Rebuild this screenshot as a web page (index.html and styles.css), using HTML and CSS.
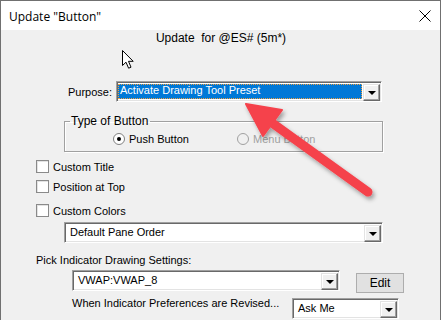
FILE: index.html
```html
<!DOCTYPE html>
<html lang="en">
<head>
    <meta charset="UTF-8">
    <title>Update "Button"</title>
    <link rel="stylesheet" href="styles.css">
</head>
<body>
    <div class="window">
        <div class="titlebar">
            <span class="title">Update "Button"</span>
            <svg class="close" width="12" height="12" viewBox="0 0 12 12">
                <path d="M0.5 0.5 L11.5 11.5 M11.5 0.5 L0.5 11.5" stroke="#000" stroke-width="1"/>
            </svg>
        </div>

        <div class="content">
            <div class="heading">Update&nbsp; for @ES# (5m*)</div>

            <div class="row purpose">
                <span class="label">Purpose:</span>
                <div class="combo combo-purpose">
                    <div class="value selected"><span>Activate Drawing Tool Preset</span></div>
                    <div class="drop"><i></i></div>
                </div>
            </div>

            <fieldset class="group">
                <legend>Type of Button</legend>
                <div class="radios">
                    <div class="radio checked">Push Button</div>
                    <div class="radio disabled">Menu Button</div>
                </div>
            </fieldset>

            <div class="check first">Custom Title</div>
            <div class="check second">Position at Top</div>
            <div class="check third">Custom Colors</div>

            <div class="combo combo-pane">
                <div class="value">Default Pane Order</div>
                <div class="drop"><i></i></div>
            </div>

            <div class="pick-label">Pick Indicator Drawing Settings:</div>

            <div class="row vwap">
                <div class="combo combo-vwap">
                    <div class="value">VWAP:VWAP_8</div>
                    <div class="drop"><i></i></div>
                </div>
                <button class="btn">Edit</button>
            </div>

            <div class="row revised">
                <span class="revised-label">When Indicator Preferences are Revised...</span>
                <div class="combo combo-ask">
                    <div class="value">Ask Me</div>
                    <div class="drop"><i></i></div>
                </div>
            </div>
        </div>

        <!-- mouse pointer left over the dialog -->
        <svg class="cursor" width="14" height="20" viewBox="0 0 14 20">
            <path d="M0.5 0.5 L0.5 15.5 L4 12.2 L6.6 18.2 L9 17.2 L6.5 11.3 L11.2 11.3 Z" fill="#fff" stroke="#000" stroke-width="1" stroke-linejoin="round"/>
        </svg>

        <!-- annotation arrow -->
        <svg class="annotation" width="441" height="320" viewBox="0 0 441 320">
            <defs>
                <filter id="shadow" x="-20%" y="-20%" width="140%" height="140%">
                    <feDropShadow dx="2" dy="3" stdDeviation="2" flood-color="#000" flood-opacity="0.35"/>
                </filter>
            </defs>
            <g filter="url(#shadow)" fill="#f5424c" stroke="#f5424c">
                <line x1="368" y1="192" x2="268" y2="120" stroke-width="9" stroke-linecap="round"/>
                <polygon points="246,104 282,110 263,136" stroke-width="2" stroke-linejoin="round"/>
            </g>
        </svg>
    </div>
</body>
</html>
```

FILE: styles.css
```css
body {
    margin: 0;
    font-family: "Liberation Sans", Arial, sans-serif;
    font-size: 11px;
    color: #000;
    background: #f0f0f0;
}
.window {
    position: relative;
    width: 439px;
    height: 319px;
    overflow: hidden;
    border: 1px solid #707070;
    border-bottom: none;
    background: #f0f0f0;
}
.titlebar {
    height: 29px;
    background: #fff;
    display: flex;
    align-items: center;
    justify-content: space-between;
    padding: 0 9px 0 8px;
}
.title {
    font-family: "Open Sans", "Liberation Sans", sans-serif;
    font-size: 12px;
    margin-top: 1px;
}
.close {
    margin-top: 1px;
}
.content {
    display: flex;
    flex-direction: column;
    align-items: flex-start;
}
.heading {
    align-self: stretch;
    text-align: center;
    font-size: 12px;
    line-height: 16px;
    padding-left: 1px;
}
.row {
    display: flex;
    align-items: center;
}

/* combo boxes */
.combo {
    display: flex;
    height: 17px;
    padding: 1px;
    background: #fff;
    border: 1px solid;
    border-color: #a0a0a0 #fff #fff #a0a0a0;
    box-shadow: inset 1px 1px #696969, inset -1px -1px #e3e3e3;
}
.combo .value {
    flex: 1;
    padding: 0 3px 0 4px;
    line-height: 17px;
    white-space: nowrap;
    overflow: hidden;
}
.combo .value.selected {
    margin: 1px 1px 1px 0;
    padding: 0 2px;
    line-height: 13px;
    background: #0078d7;
    color: #fff;
    outline: 1px dotted #f0a040;
    outline-offset: -1px;
}
.combo .drop {
    width: 15px;
    height: 15px;
    margin-top: 1px;
    background: #f0f0f0;
    border: 1px solid;
    border-color: #e3e3e3 #696969 #696969 #e3e3e3;
    box-shadow: inset -1px -1px #a0a0a0, inset 1px 1px #fff;
    display: flex;
    align-items: center;
    justify-content: center;
}
.combo .drop i {
    width: 0;
    height: 0;
    border-left: 4px solid transparent;
    border-right: 4px solid transparent;
    border-top: 4px solid #000;
    margin-top: 1px;
}

.purpose {
    margin-top: 35px;
    margin-left: 67px;
}
.purpose .label {
    width: 48px;
}
.combo-purpose {
    width: 262px;
}

/* group box */
.group {
    margin: 11px 0 0 63px;
    width: 317px;
    padding: 0 0 4px;
    border: 1px solid #a0a0a0;
    box-shadow: 1px 1px #fff, inset 1px 1px #fff;
}
.group legend {
    margin-left: 5px;
    padding: 0 2px 0 1px;
    line-height: 16px;
    font-size: 12px;
}
.radios {
    display: flex;
    padding-top: 2px;
    padding-left: 48px;
}
.radio {
    position: relative;
    line-height: 16px;
    padding-left: 16px;
    width: 108px;
}
.radio::before {
    content: "";
    position: absolute;
    left: 0;
    top: 2px;
    width: 10px;
    height: 10px;
    border-radius: 50%;
    background: #fff;
    border: 1px solid #808080;
}
.radio.checked::after {
    content: "";
    position: absolute;
    left: 4px;
    top: 6px;
    width: 4px;
    height: 4px;
    border-radius: 50%;
    background: #000;
}
.radio.disabled {
    color: #a0a0a0;
}
.radio.disabled::before {
    background: #f0f0f0;
    border-color: #a0a0a0;
}

/* check boxes */
.check {
    position: relative;
    line-height: 16px;
    margin-left: 35px;
    padding-left: 17px;
}
.check::before {
    content: "";
    position: absolute;
    left: 0;
    top: 1px;
    width: 11px;
    height: 11px;
    background: #fff;
    border: 1px solid #8a8a8a;
    box-shadow: inset 1px 1px #e3e3e3;
}
.check.first {
    margin-top: 7px;
}
.check.second {
    margin-top: 4px;
}
.check.third {
    margin-top: 8px;
}

.combo-pane {
    margin: 3px 0 0 63px;
    width: 315px;
}
.pick-label {
    margin: 9px 0 0 35px;
    line-height: 16px;
}
.vwap {
    margin: 2px 0 0 71px;
    align-items: flex-start;
}
.combo-vwap {
    width: 264px;
}
.btn {
    margin: 3px 0 0 16px;
    width: 48px;
    height: 20px;
    padding: 0;
    font: inherit;
    font-size: 12px;
    background: #e1e1e1;
    border: 1px solid #adadad;
    color: #000;
}
.revised {
    margin: 2px 0 0 71px;
    align-items: flex-start;
}
.revised-label {
    width: 220px;
    line-height: 16px;
    white-space: nowrap;
}
.combo-ask {
    margin-top: 3px;
    width: 103px;
}

/* overlays */
.cursor {
    position: absolute;
    left: 121px;
    top: 49px;
}
.annotation {
    position: absolute;
    left: -1px;
    top: -1px;
    pointer-events: none;
}
```
